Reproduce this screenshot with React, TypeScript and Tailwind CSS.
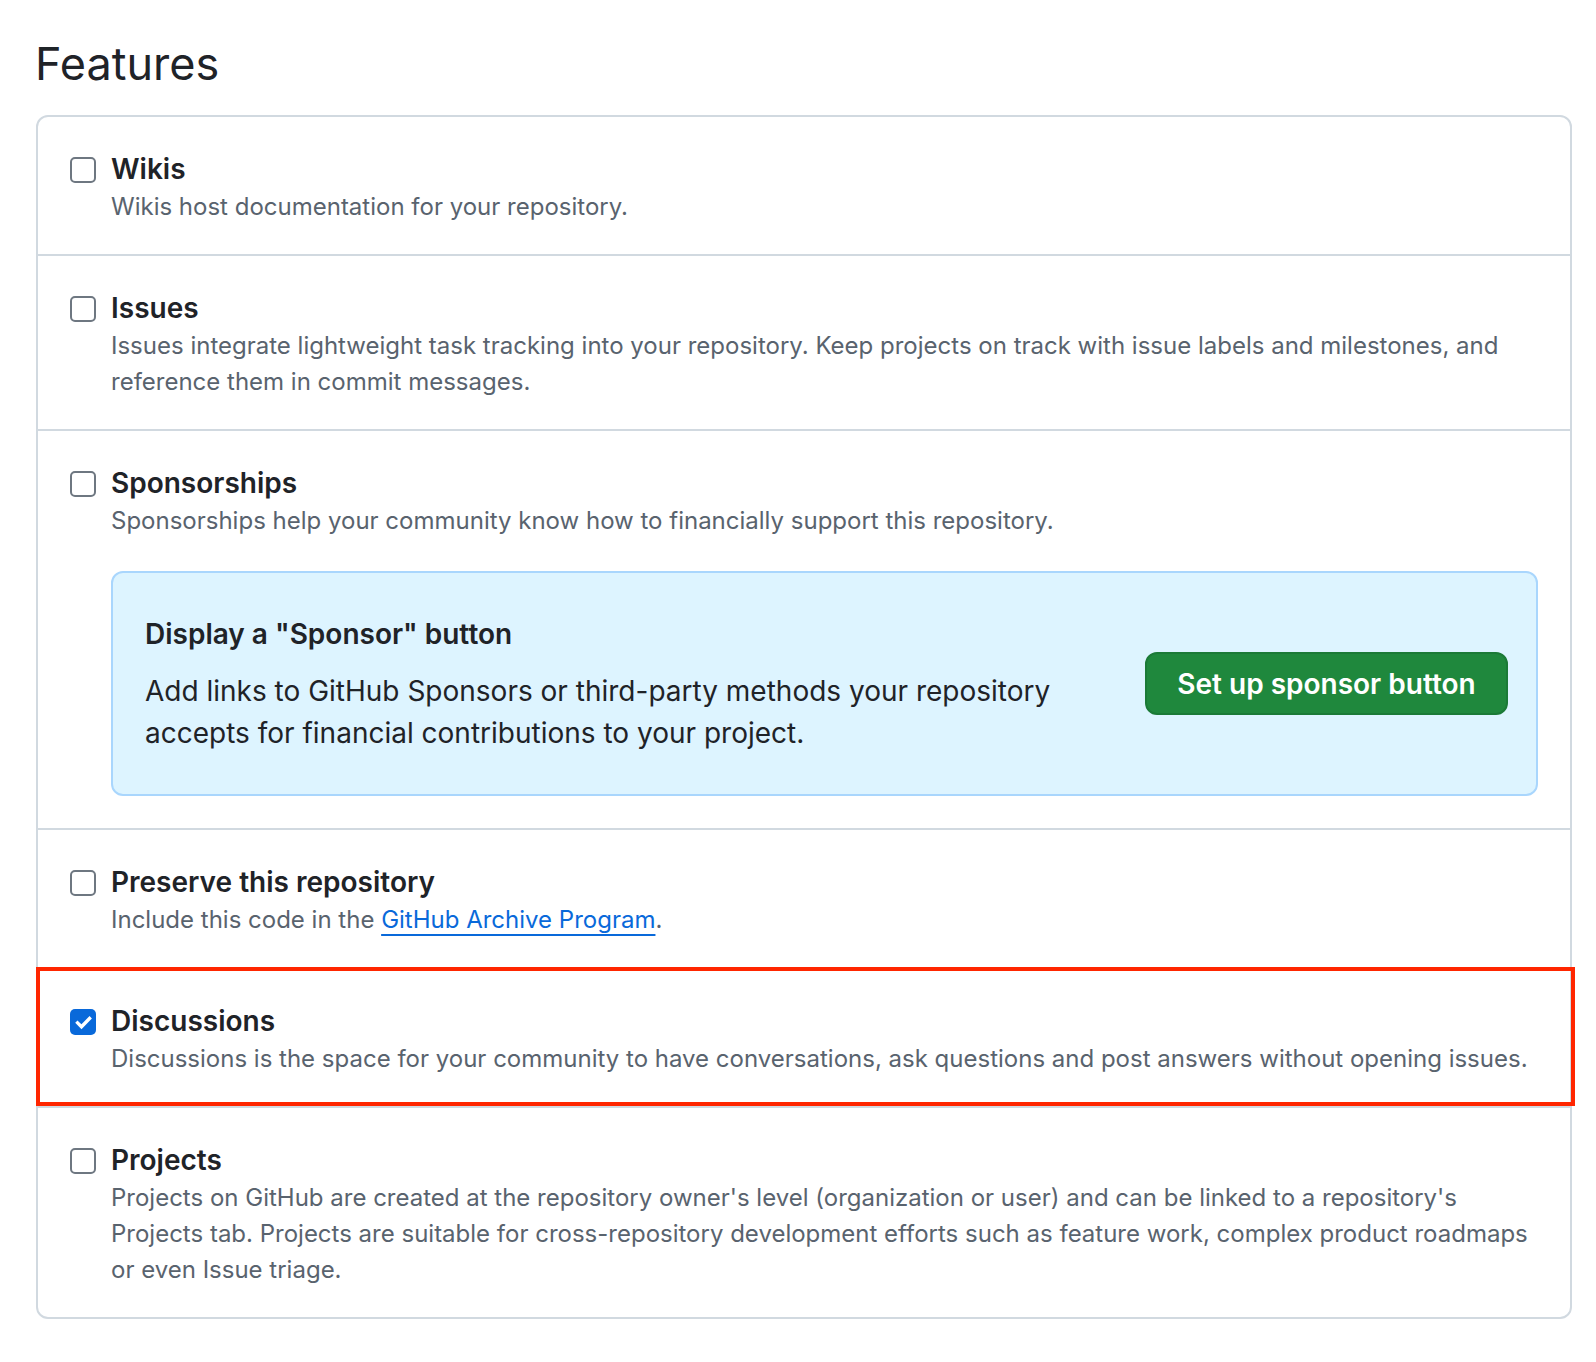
import React from 'react';

const font = { fontFamily: 'Inter, "Noto Sans", sans-serif' };

const Checkbox: React.FC<{ checked?: boolean }> = ({ checked }) =>
  checked ? (
    <span className="mt-[7px] flex h-[26px] w-[26px] shrink-0 items-center justify-center rounded-[5px] bg-[#0969da]">
      <svg width="19" height="19" viewBox="0 0 16 16" fill="none">
        <path d="M3 8.3l3.3 3.3 6.8-7" stroke="#fff" strokeWidth="2.8" strokeLinecap="square" />
      </svg>
    </span>
  ) : (
    <span className="mt-[7px] h-[26px] w-[26px] shrink-0 rounded-[5px] border-2 border-[#6e7781] bg-white" />
  );

const Feature: React.FC<{
  title: string;
  checked?: boolean;
  children: React.ReactNode;
  extra?: React.ReactNode;
}> = ({ title, checked, children, extra }) => (
  <div className="flex gap-[15px] pb-[29px] pl-[32px] pr-[32px] pt-[33px]">
    <Checkbox checked={checked} />
    <div className="min-w-0 flex-1">
      <div className="text-[28px] font-semibold leading-[39px] text-[#1f2328]">{title}</div>
      <div className="text-[24px] leading-[36px] text-[#59636e]">{children}</div>
      {extra}
    </div>
  </div>
);

export default function App() {
  return (
    <div className="min-h-[1362px] bg-white pl-[36px] pr-[24px] pt-[26px]" style={font}>
      <h1 className="mb-[14px] ml-[-1px] text-[45px] font-normal leading-[75px] text-[#1f2328]">Features</h1>

      <div className="rounded-[12px] border-2 border-[#d1d9e0] bg-white">
        <div className="divide-y-2 divide-[#d1d9e0]">
          <Feature title="Wikis">Wikis host documentation for your repository.</Feature>

          <Feature title="Issues">
            Issues integrate lightweight task tracking into your repository. Keep projects on track with issue labels and
            milestones, and reference them in commit messages.
          </Feature>

          <Feature
            title="Sponsorships"
            extra={
              <div className="mb-[3px] mt-[32px] flex items-center gap-[32px] rounded-[12px] border-2 border-[#a9d6fd] bg-[#ddf4ff] py-[40px] pl-[32px] pr-[28px]">
                <div className="min-w-0 flex-1">
                  <div className="mb-[15px] text-[28px] font-semibold leading-[42px] text-[#1f2328]">
                    Display a "Sponsor" button
                  </div>
                  <div className="text-[28px] leading-[42px] text-[#1f2328]">
                    Add links to GitHub Sponsors or third-party methods your repository accepts for financial contributions
                    to your project.
                  </div>
                </div>
                <button className="flex h-[63px] w-[363px] shrink-0 items-center justify-center rounded-[12px] border-2 border-[#1b7a37] bg-[#1f883d] text-[28px] font-semibold text-white">
                  Set up sponsor button
                </button>
              </div>
            }
          >
            Sponsorships help your community know how to financially support this repository.
          </Feature>

          <Feature title="Preserve this repository">
            Include this code in the{' '}
            <a href="#" className="text-[#0969da] underline decoration-2 underline-offset-[6px]">
              GitHub Archive Program
            </a>
            .
          </Feature>

          <div className="relative">
            <Feature title="Discussions" checked>
              Discussions is the space for your community to have conversations, ask questions and post answers without
              opening issues.
            </Feature>
            {/* annotation frame */}
            <div className="pointer-events-none absolute bottom-0 left-[-2px] right-[-5px] top-[-2px] border-4 border-[#ff2600]" />
          </div>

          <Feature title="Projects">
            Projects on GitHub are created at the repository owner's level (organization or user) and can be linked to a
            repository's Projects tab. Projects are suitable for cross-repository development efforts such as feature work,
            complex product roadmaps or even Issue triage.
          </Feature>
        </div>
      </div>
    </div>
  );
}
